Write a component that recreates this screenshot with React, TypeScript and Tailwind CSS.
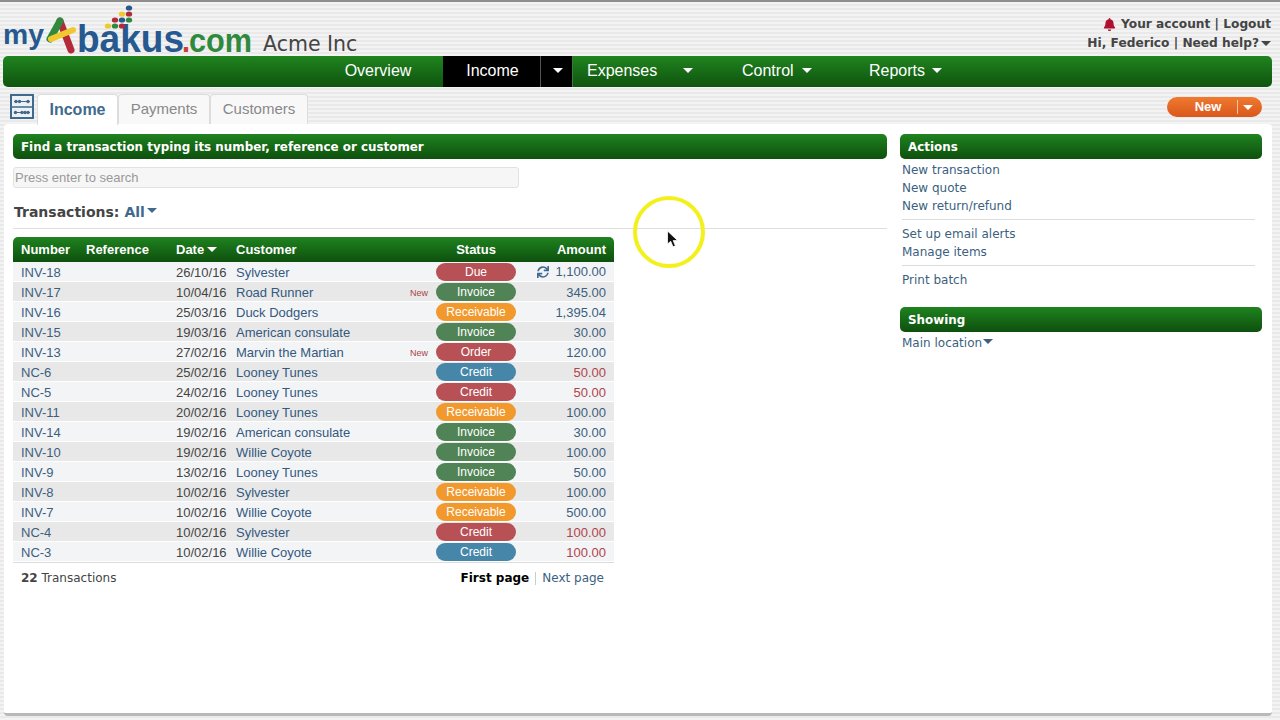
import React from "react";
import { FaBell, FaSync } from "react-icons/fa";

type Row = {
  number: string;
  date: string;
  customer: string;
  isNew?: boolean;
  status: string;
  pill: string;
  amount: string;
  red?: boolean;
  sync?: boolean;
};

const DUE = "bg-[#b75156]";
const INVOICE = "bg-[#508356]";
const RECEIVABLE = "bg-[#f2992e]";
const CREDIT = "bg-[#4686a9]";

const rows: Row[] = [
  { number: "INV-18", date: "26/10/16", customer: "Sylvester", status: "Due", pill: DUE, amount: "1,100.00", sync: true },
  { number: "INV-17", date: "10/04/16", customer: "Road Runner", isNew: true, status: "Invoice", pill: INVOICE, amount: "345.00" },
  { number: "INV-16", date: "25/03/16", customer: "Duck Dodgers", status: "Receivable", pill: RECEIVABLE, amount: "1,395.04" },
  { number: "INV-15", date: "19/03/16", customer: "American consulate", status: "Invoice", pill: INVOICE, amount: "30.00" },
  { number: "INV-13", date: "27/02/16", customer: "Marvin the Martian", isNew: true, status: "Order", pill: DUE, amount: "120.00" },
  { number: "NC-6", date: "25/02/16", customer: "Looney Tunes", status: "Credit", pill: CREDIT, amount: "50.00", red: true },
  { number: "NC-5", date: "24/02/16", customer: "Looney Tunes", status: "Credit", pill: DUE, amount: "50.00", red: true },
  { number: "INV-11", date: "20/02/16", customer: "Looney Tunes", status: "Receivable", pill: RECEIVABLE, amount: "100.00" },
  { number: "INV-14", date: "19/02/16", customer: "American consulate", status: "Invoice", pill: INVOICE, amount: "30.00" },
  { number: "INV-10", date: "19/02/16", customer: "Willie Coyote", status: "Invoice", pill: INVOICE, amount: "100.00" },
  { number: "INV-9", date: "13/02/16", customer: "Looney Tunes", status: "Invoice", pill: INVOICE, amount: "50.00" },
  { number: "INV-8", date: "10/02/16", customer: "Sylvester", status: "Receivable", pill: RECEIVABLE, amount: "100.00" },
  { number: "INV-7", date: "10/02/16", customer: "Willie Coyote", status: "Receivable", pill: RECEIVABLE, amount: "500.00" },
  { number: "NC-4", date: "10/02/16", customer: "Sylvester", status: "Credit", pill: DUE, amount: "100.00", red: true },
  { number: "NC-3", date: "10/02/16", customer: "Willie Coyote", status: "Credit", pill: CREDIT, amount: "100.00", red: true },
];

const Caret = ({ className }: { className: string }) => (
  <span className={`inline-block w-0 h-0 border-x-[5px] border-x-transparent border-t-[5px] ${className}`} />
);

const Bar = ({ children }: { children: React.ReactNode }) => (
  <div className="h-[25px] rounded-[5px] bg-linear-to-b from-[#1f831f] to-[#0e500e] px-2 pt-[2px] flex items-center text-white text-[11.9px] font-bold font-['DejaVu_Sans',sans-serif]">
    {children}
  </div>
);

const Logo = () => (
  <svg width="256" height="54" viewBox="0 0 256 54" className="shrink-0">
    <g fontFamily="'Liberation Sans', sans-serif" fontWeight="bold">
      <text x="3" y="42" fontSize="28" fill="#26598f" textLength="41" lengthAdjust="spacingAndGlyphs">my</text>
      <text x="77" y="50" fontSize="39" fill="#26598f" textLength="107" lengthAdjust="spacingAndGlyphs">bakus</text>
      <text x="182" y="50" fontSize="33" fill="#c8402f" textLength="8" lengthAdjust="spacingAndGlyphs">.</text>
      <text x="189" y="50" fontSize="33" fill="#2f8a3e" textLength="63" lengthAdjust="spacingAndGlyphs">com</text>
    </g>
    <path d="M60 19 L71 48" stroke="#b52a38" strokeWidth="7" strokeLinecap="round" />
    <path d="M60 19 L50 37" stroke="#2f8a3e" strokeWidth="7" strokeLinecap="round" />
    <path d="M51 37 L73 28" stroke="#f0c92e" strokeWidth="6" strokeLinecap="round" />
    {[
      [129, 6, "#26598f"],
      [122, 12, "#f0c92e"],
      [129, 12, "#b52a38"],
      [115, 18, "#b52a38"],
      [122, 18, "#26598f"],
      [129, 18, "#2f8a3e"],
      [108, 24, "#f0c92e"],
      [115, 24, "#2f8a3e"],
      [122, 24, "#b52a38"],
    ].map(([cx, cy, fill], i) => (
      <ellipse key={i} cx={cx as number} cy={cy as number} rx="3.2" ry="2.6" fill={fill as string} />
    ))}
  </svg>
);

const AbacusIcon = () => (
  <svg width="24" height="25" viewBox="0 0 24 25" className="shrink-0">
    <rect x="1" y="1" width="22" height="23" fill="#eef1f4" stroke="#3f6a8e" strokeWidth="2" />
    <path d="M1 13 H23" stroke="#3f6a8e" strokeWidth="1.5" />
    <path d="M4 7.5 H20 M4 18.5 H20" stroke="#3f6a8e" strokeWidth="1" />
    <g fill="#3f6a8e">
      <circle cx="6" cy="7.5" r="1.7" />
      <circle cx="9.5" cy="7.5" r="1.7" />
      <circle cx="18" cy="7.5" r="1.7" />
      <circle cx="5.5" cy="18.5" r="1.7" />
      <circle cx="12" cy="18.5" r="1.7" />
      <circle cx="15" cy="18.5" r="1.7" />
      <circle cx="18" cy="18.5" r="1.7" />
    </g>
  </svg>
);

const Divider = () => <div className="h-px bg-[#dcdcdc] ml-[2px] mr-[7px] mt-[4px] mb-[5px]" />;

const SideLink = ({ children }: { children: React.ReactNode }) => (
  <div className="h-[18px] leading-[18px] text-[12px] text-[#3c5f80] px-[2px]">{children}</div>
);

export default function App() {
  return (
    <div className="relative w-[1280px] h-[720px] overflow-hidden font-['Liberation_Sans',sans-serif] border-t-2 border-[#8e8e8e] bg-[repeating-linear-gradient(180deg,#f3f3f3_0px,#f3f3f3_2px,#e9e9e9_2px,#e9e9e9_4px)]">
      {/* header */}
      <div className="h-[54px] flex justify-between">
        <div className="flex items-end">
          <Logo />
          <span className="ml-[7px] text-[20.5px] leading-[24px] text-[#444] font-['DejaVu_Sans',sans-serif]">Acme Inc</span>
        </div>
        <div className="pr-[9px] pt-[13px] flex flex-col items-end text-[12.2px] leading-[19px] font-bold text-[#444] font-['DejaVu_Sans',sans-serif]">
          <div className="flex items-center">
            <FaBell className="text-[#b01030] text-[13px] mr-[5px]" />
            <span>Your account | Logout</span>
          </div>
          <div className="flex items-center">
            <span>Hi, Federico | Need help?</span>
            <Caret className="border-t-[#444] ml-[2px]" />
          </div>
        </div>
      </div>

      {/* main nav */}
      <div className="ml-[3px] w-[1269px] h-[31px] rounded-[5px] bg-linear-to-b from-[#20841f] to-[#0f540f] flex pl-[310px] text-white text-[16px]">
        <div className="w-[130px] pb-[2px] flex items-center justify-center">Overview</div>
        <div className="w-[98px] pb-[2px] pl-[2px] bg-black flex items-center justify-center border-r border-[#555]">Income</div>
        <div className="w-[32px] pl-[3px] pb-[2px] bg-black flex items-center justify-center border-r border-[#3a7a3a]">
          <Caret className="border-t-white" />
        </div>
        <div className="w-[150px] pl-[14px] pb-[2px] flex items-center">
          Expenses
          <Caret className="border-t-white ml-[26px]" />
        </div>
        <div className="w-[127px] pl-[19px] pb-[2px] flex items-center">
          Control
          <Caret className="border-t-white ml-[8px]" />
        </div>
        <div className="w-[127px] pl-[19px] pb-[2px] flex items-center">
          Reports
          <Caret className="border-t-white ml-[7px]" />
        </div>
      </div>

      {/* tabs */}
      <div className="h-[37px] pl-[10px] pr-[18px] flex items-end justify-between">
        <div className="flex items-end">
          <div className="mb-[5px] mr-[3px]">
            <AbacusIcon />
          </div>
          <div className="h-[31px] w-[81px] -mb-px z-10 bg-white border border-b-0 border-[#ddd] rounded-t-[4px] flex items-center justify-center text-[16px] font-bold text-[#3f6a8e]">Income</div>
          <div className="h-[30px] w-[92px] bg-[#f8f8f8] border border-b-0 border-[#ddd] rounded-t-[4px] flex items-center justify-center text-[15px] text-[#888]">Payments</div>
          <div className="h-[30px] w-[98px] bg-[#f8f8f8] border border-b-0 border-[#ddd] rounded-t-[4px] flex items-center justify-center text-[15px] text-[#888]">Customers</div>
        </div>
        <div className="mb-[7px] w-[95px] h-[20px] rounded-full bg-linear-to-b from-[#f0792f] to-[#d9571c] flex items-center text-white text-[13px] font-bold">
          <span className="w-[68px] pl-[14px] text-center">New</span>
          <span className="h-[14px] w-px bg-[#f6c3a4] ml-[2px]" />
          <Caret className="border-t-white ml-[5px]" />
        </div>
      </div>

      {/* white panel */}
      <div className="ml-[4px] w-[1268px] h-[592px] bg-white rounded-[4px] border-b-[3px] border-[#b9b9b9] pt-[10px] pl-[9px] flex gap-[13px]">
        <div className="w-[874px]">
          <Bar>Find a transaction typing its number, reference or customer</Bar>
          <div className="mt-[8px] w-[506px] h-[21px] rounded-[3px] border border-[#e2e2e2] bg-[#f6f6f6] px-px flex items-center text-[13px] text-[#999]">
            Press enter to search
          </div>
          <div className="mt-[14px] h-[20px] pl-px flex items-center text-[14px] font-bold text-[#444] font-['DejaVu_Sans',sans-serif]">
            <span>Transactions:</span>
            <span className="ml-[5px] text-[#3f6a8e]">All</span>
            <Caret className="border-t-[#3f6a8e] ml-[2px] -mt-[3px]" />
          </div>
          <div className="mt-[6px] h-px w-[874px] bg-[#dedede]" />

          <table className="mt-[8px] w-[601px] table-fixed border-separate border-spacing-0 text-[13px] leading-[16px]">
            <colgroup>
              <col className="w-[65px]" />
              <col className="w-[90px]" />
              <col className="w-[60px]" />
              <col className="w-[202px]" />
              <col className="w-[92px]" />
              <col className="w-[92px]" />
            </colgroup>
            <thead>
              <tr className="h-[25px] bg-linear-to-b from-[#1f831f] to-[#0e500e] text-white font-bold text-left">
                <th className="h-[25px] pl-[8px] rounded-tl-[5px]">Number</th>
                <th className="pl-[8px]">Reference</th>
                <th className="pl-[8px] whitespace-nowrap">
                  Date
                  <Caret className="border-t-white ml-[3px] mb-[2px]" />
                </th>
                <th className="pl-[8px]">Customer</th>
                <th className="text-center">Status</th>
                <th className="pr-[8px] text-right rounded-tr-[5px]">Amount</th>
              </tr>
            </thead>
            <tbody>
              {rows.map((r, i) => (
                <tr key={r.number} className={`h-[20px] [&>td]:border-b [&>td]:border-white ${i % 2 === 0 ? "bg-[#f3f4f6]" : "bg-[#e8e8e8]"}`}>
                  <td className="h-[20px] pt-[2px] pl-[8px] text-[#3c5f80]">{r.number}</td>
                  <td />
                  <td className="pt-[2px] pl-[8px] text-[#444] whitespace-nowrap">{r.date}</td>
                  <td className="pt-[2px] pl-[8px] text-[#33597f] relative">
                    {r.customer}
                    {r.isNew && <span className="absolute right-[2px] top-[3px] text-[9px] text-[#a8444a]">New</span>}
                  </td>
                  <td className="pt-px">
                    <div className={`mx-auto w-[80px] h-[18px] rounded-full flex items-center justify-center pb-px text-[12px] text-white ${r.pill}`}>
                      {r.status}
                    </div>
                  </td>
                  <td className={`pt-[2px] pr-[8px] text-right ${r.red ? "text-[#b0454c]" : "text-[#3c5f80]"}`}>
                    {r.sync && <FaSync className="inline-block text-[12px] text-[#3f6a8e] mr-[6px] mb-[3px]" />}
                    {r.amount}
                  </td>
                </tr>
              ))}
            </tbody>
          </table>
          <div className="w-[601px] h-px bg-[#dcdcdc]" />

          <div className="w-[601px] mt-[6px] pl-[8px] pr-[10px] flex justify-between text-[12px] leading-[18px] text-[#444] font-['DejaVu_Sans',sans-serif]">
            <span>
              <b>22</b> Transactions
            </span>
            <span className="flex items-center">
              <b className="text-black">First page</b>
              <span className="mx-[6px] h-[13px] w-px bg-[#ccc]" />
              <span className="text-[#3c5f80]">Next page</span>
            </span>
          </div>
        </div>

        <div className="w-[362px] font-['DejaVu_Sans',sans-serif]">
          <Bar>Actions</Bar>
          <div className="mt-[2px]">
            <SideLink>New transaction</SideLink>
            <SideLink>New quote</SideLink>
            <SideLink>New return/refund</SideLink>
            <Divider />
            <SideLink>Set up email alerts</SideLink>
            <SideLink>Manage items</SideLink>
            <Divider />
            <SideLink>Print batch</SideLink>
          </div>
          <div className="mt-[18px]">
            <Bar>Showing</Bar>
          </div>
          <div className="mt-[2px] flex items-center">
            <SideLink>Main location</SideLink>
            <Caret className="border-t-[#3c5f80] -ml-[1px] -mt-[3px]" />
          </div>
        </div>
      </div>

      {/* cursor highlight from the screen recording */}
      <div className="absolute left-[633px] top-[194px] w-[72px] h-[72px] rounded-full border-[4px] border-[#f3f01e]" />
      <svg className="absolute left-[666px] top-[228px]" width="13" height="19" viewBox="0 0 13 19">
        <path d="M1.5 1 L1.5 14 L4.7 11.3 L7 16.8 L9.4 15.8 L7.2 10.6 L11.5 10.4 Z" fill="#111" stroke="#fff" strokeWidth="0.8" />
      </svg>
    </div>
  );
}
